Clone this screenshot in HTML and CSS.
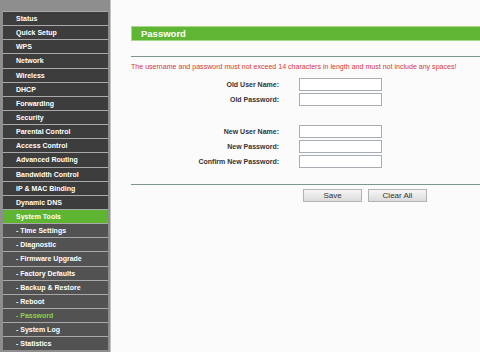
FILE: index.html
```html
<!DOCTYPE html>
<html lang="en">
<head>
    <meta charset="UTF-8">
    <title>Password</title>
    <link rel="stylesheet" href="styles.css">
</head>
<body>
    <div class="page">
        <!-- Menu -->
        <nav class="menu">
            <a class="item">Status</a>
            <a class="item">Quick Setup</a>
            <a class="item">WPS</a>
            <a class="item">Network</a>
            <a class="item">Wireless</a>
            <a class="item">DHCP</a>
            <a class="item">Forwarding</a>
            <a class="item">Security</a>
            <a class="item">Parental Control</a>
            <a class="item">Access Control</a>
            <a class="item">Advanced Routing</a>
            <a class="item">Bandwidth Control</a>
            <a class="item">IP &amp; MAC Binding</a>
            <a class="item">Dynamic DNS</a>
            <a class="item open">System Tools</a>
            <a class="item sub">- Time Settings</a>
            <a class="item sub">- Diagnostic</a>
            <a class="item sub">- Firmware Upgrade</a>
            <a class="item sub">- Factory Defaults</a>
            <a class="item sub">- Backup &amp; Restore</a>
            <a class="item sub">- Reboot</a>
            <a class="item sub current">- Password</a>
            <a class="item sub">- System Log</a>
            <a class="item sub">- Statistics</a>
        </nav>

        <!-- Password form -->
        <main class="content">
            <div class="title">Password</div>
            <div class="rule"></div>
            <p class="note">The username and password must not exceed 14 characters in length and must not include any spaces!</p>
            <div class="fields">
                <label>Old User Name:</label><input type="text">
                <label>Old Password:</label><input type="password">
            </div>
            <div class="fields second">
                <label>New User Name:</label><input type="text">
                <label>New Password:</label><input type="password">
                <label>Confirm New Password:</label><input type="password">
            </div>
            <div class="rule bottom"></div>
            <div class="buttons">
                <button>Save</button>
                <button>Clear All</button>
            </div>
        </main>
    </div>
</body>
</html>
```

FILE: styles.css
```css
/* Global */
body {
    margin: 0;
    font-family: 'Liberation Sans', Arial, sans-serif;
    background: #fbfbfb;
    overflow: hidden;
}

.page {
    display: flex;
    height: 352px;
}

/* Menu */
.menu {
    width: 105px;
    flex-shrink: 0;
    background: #8e8e8e;
    padding: 11px 2px 0 3px;
    border-right: 1px solid #c4c4c4;
    display: flex;
    flex-direction: column;
}

.item {
    height: 13.15px;
    line-height: 13.15px;
    border-top: 1px solid #a9a9a9;
    background: #3d3d3d;
    color: #fff;
    font-size: 7px;
    font-weight: bold;
    padding-left: 13px;
    white-space: nowrap;
}

.item.open {
    background: #5db531;
}

.item.sub {
    background: #525252;
}

.item.current {
    color: #8fd14f;
}

/* Content */
.content {
    flex: 1;
    padding: 26px 0 0 20px;
}

.title {
    height: 13px;
    line-height: 13px;
    background: #5fb534;
    border: 1px solid #a8d88a;
    border-right: none;
    color: #fff;
    font-size: 9.5px;
    font-weight: bold;
    padding-left: 9px;
}

.rule {
    margin-top: 15px;
    border-top: 1px solid #7d978f;
}

.note {
    margin: 5px 0 0;
    font-size: 7.07px;
    line-height: 10px;
    color: #d23a3a;
    white-space: nowrap;
}

.fields {
    display: grid;
    grid-template-columns: 148px 83px;
    grid-auto-rows: 13px;
    column-gap: 20px;
    row-gap: 2px;
    margin-top: 6px;
}

.fields.second {
    margin-top: 19px;
}

.fields label {
    text-align: right;
    font-size: 7px;
    font-weight: bold;
    line-height: 13px;
    color: #333;
}

.fields input {
    box-sizing: border-box;
    width: 83px;
    height: 13px;
    margin: 0;
    padding: 0 2px;
    border: 1px solid #a8adb3;
    background: #fff;
    font-size: 7px;
}

.rule.bottom {
    margin-top: 16px;
}

.buttons {
    display: flex;
    gap: 6px;
    margin-top: 4px;
    padding-left: 172px;
}

.buttons button {
    width: 59px;
    height: 13px;
    padding: 0;
    border: 1px solid #b3b3b3;
    background: linear-gradient(#f6f6f6, #dcdcdc);
    color: #333;
    font-family: 'Liberation Sans', Arial, sans-serif;
    font-size: 8px;
    line-height: 11px;
}
```
